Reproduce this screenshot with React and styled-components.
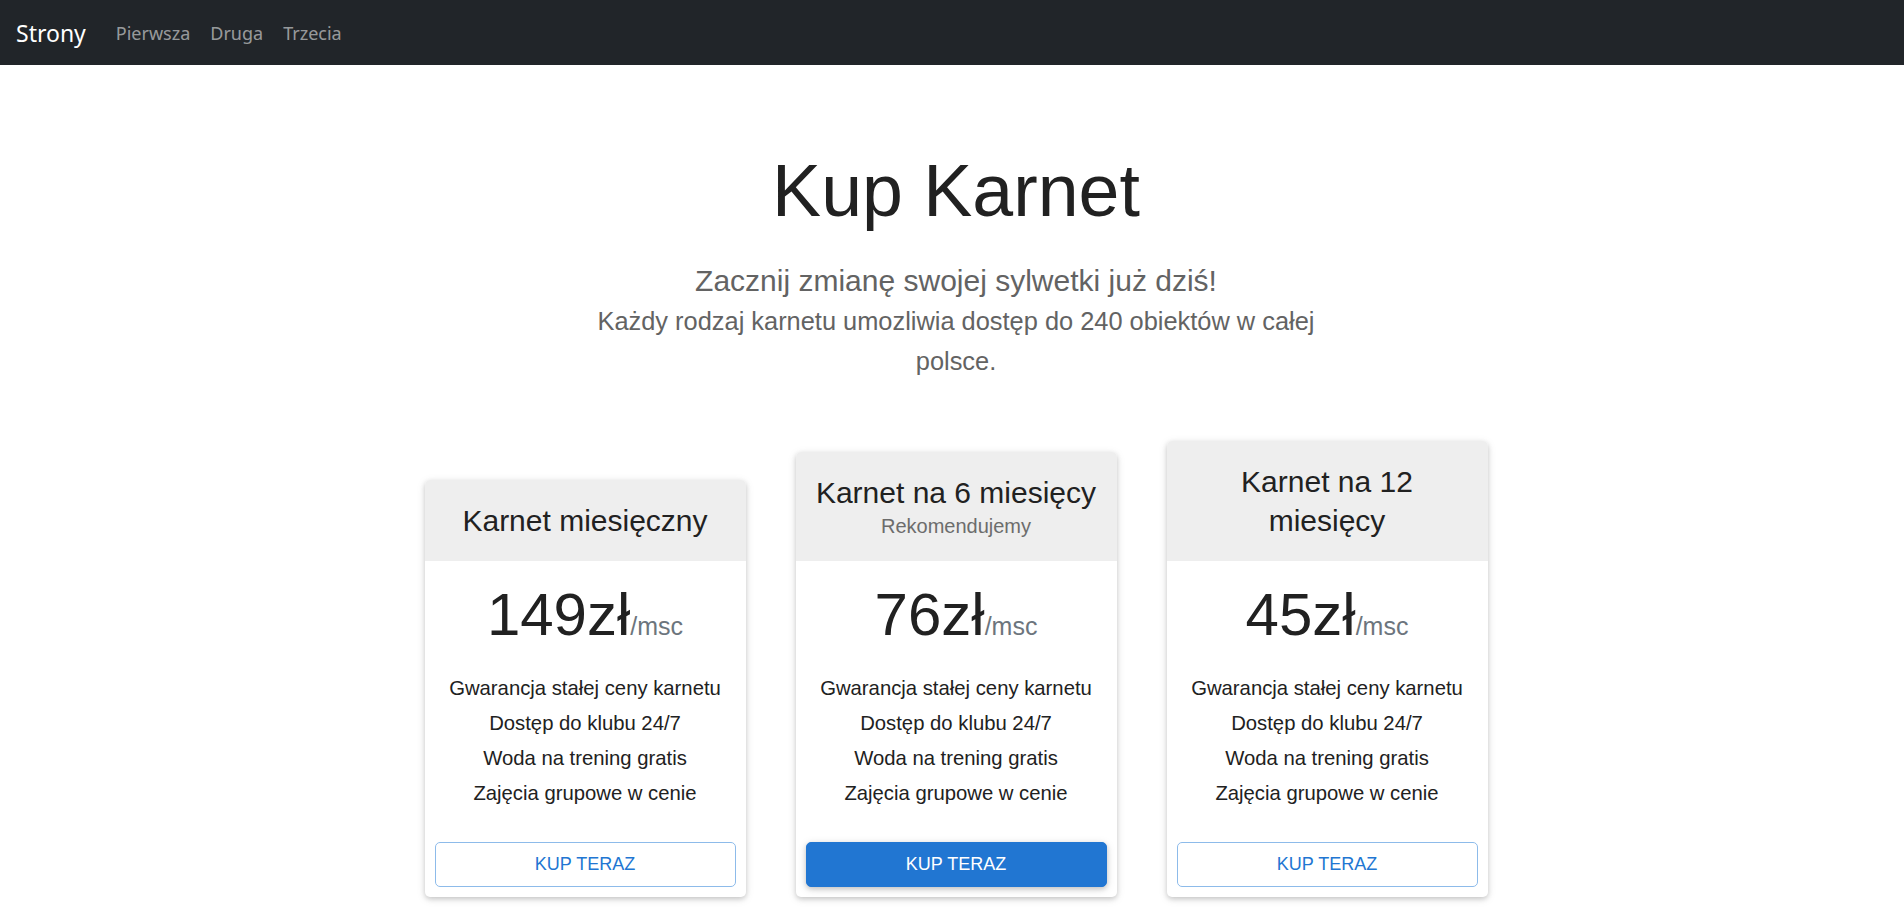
import React from "react";
import styled, { createGlobalStyle } from "styled-components";

const GlobalStyle = createGlobalStyle`
  html, body {
    margin: 0;
    padding: 0;
    background: #fff;
    font-family: "Liberation Sans", Arial, sans-serif;
    color: #212529;
  }
`;

const NavBar = styled.nav`
  display: flex;
  align-items: center;
  height: 65px;
  padding: 0 16px;
  background: #212529;
  font-family: "Noto Sans", "Open Sans", sans-serif;
`;

const Brand = styled.a`
  color: #fff;
  font-size: 23px;
  margin-right: 20px;
  text-decoration: none;
  cursor: pointer;
`;

const NavLink = styled.a`
  color: rgba(255, 255, 255, 0.55);
  font-size: 18px;
  padding: 0 10px;
  text-decoration: none;
  cursor: pointer;
`;

const Main = styled.main`
  display: flex;
  flex-direction: column;
  align-items: center;
  padding: 83px 0 27px 8px;
  text-align: center;
`;

const Title = styled.h1`
  margin: 0;
  font-size: 73.5px;
  font-weight: 400;
  line-height: 86px;
  color: #212121;
`;

const Lead = styled.p`
  margin: 29px 0 0;
  font-size: 30px;
  line-height: 36px;
  color: #636363;
`;

const Info = styled.p`
  margin: 2px 0 0;
  max-width: 750px;
  font-size: 25.4px;
  line-height: 40px;
  color: #636363;
`;

const CardRow = styled.div`
  display: flex;
  align-items: flex-end;
  justify-content: center;
  gap: 50px;
  margin-top: 60px;
`;

const Card = styled.div`
  width: 321px;
  background: #fff;
  border-radius: 5px;
  overflow: hidden;
  box-shadow: 0 2px 5px 0 rgba(0, 0, 0, 0.16), 0 2px 10px 0 rgba(0, 0, 0, 0.1);
`;

const CardHeader = styled.div`
  background: #eeeeee;
  padding: 21px 16px;
`;

const CardTitle = styled.h4`
  margin: 0;
  font-size: 30px;
  font-weight: 400;
  line-height: 39px;
  color: #212121;
  padding: 0 ${props => (props.narrow ? "50px" : "0")};
`;

const Badge = styled.div`
  font-size: 20px;
  line-height: 28px;
  color: #6c6c6c;
`;

const CardBody = styled.div`
  padding: 18px 10px 10px;
`;

const Price = styled.div`
  font-size: 60px;
  line-height: 72px;
  color: #212121;
  margin-bottom: 20px;
`;

const Per = styled.small`
  font-size: 25px;
  line-height: 1;
  color: #6c757d;
`;

const Features = styled.ul`
  list-style: none;
  margin: 0 0 31px;
  padding: 0;
  font-size: 20.3px;
  line-height: 35px;
  color: #212121;
`;

const BuyButton = styled.button`
  display: block;
  width: 100%;
  height: 45px;
  border-radius: 5px;
  font-family: "Liberation Sans", Arial, sans-serif;
  font-size: 18px;
  text-transform: uppercase;
  cursor: pointer;
  border: 1px solid ${props => (props.primary ? "#2176d2" : "#8dbbea")};
  background: ${props => (props.primary ? "#2176d2" : "#fff")};
  color: ${props => (props.primary ? "#fff" : "#2176d2")};
  box-shadow: ${props =>
    props.primary
      ? "0 2px 5px 0 rgba(0,0,0,0.16), 0 2px 10px 0 rgba(0,0,0,0.12)"
      : "none"};
`;

const features = [
  "Gwarancja stałej ceny karnetu",
  "Dostęp do klubu 24/7",
  "Woda na trening gratis",
  "Zajęcia grupowe w cenie"
];

const plans = [
  { title: "Karnet miesięczny", price: 149 },
  { title: "Karnet na 6 miesięcy", price: 76, badge: "Rekomendujemy", primary: true },
  { title: "Karnet na 12 miesięcy", price: 45, narrow: true }
];

const PlanCard = ({ title, price, badge, primary, narrow }) => (
  <Card>
    <CardHeader>
      <CardTitle narrow={narrow}>{title}</CardTitle>
      {badge && <Badge>{badge}</Badge>}
    </CardHeader>
    <CardBody>
      <Price>
        {price}zł<Per>/msc</Per>
      </Price>
      <Features>
        {features.map(f => (
          <li key={f}>{f}</li>
        ))}
      </Features>
      <BuyButton primary={primary}>Kup teraz</BuyButton>
    </CardBody>
  </Card>
);

const App = () => (
  <>
    <GlobalStyle />
    <NavBar>
      <Brand>Strony</Brand>
      <NavLink>Pierwsza</NavLink>
      <NavLink>Druga</NavLink>
      <NavLink>Trzecia</NavLink>
    </NavBar>
    <Main>
      <Title>Kup Karnet</Title>
      <Lead>Zacznij zmianę swojej sylwetki już dziś!</Lead>
      <Info>Każdy rodzaj karnetu umozliwia dostęp do 240 obiektów w całej polsce.</Info>
      <CardRow>
        {plans.map(p => (
          <PlanCard key={p.title} {...p} />
        ))}
      </CardRow>
    </Main>
  </>
);

export default App;
